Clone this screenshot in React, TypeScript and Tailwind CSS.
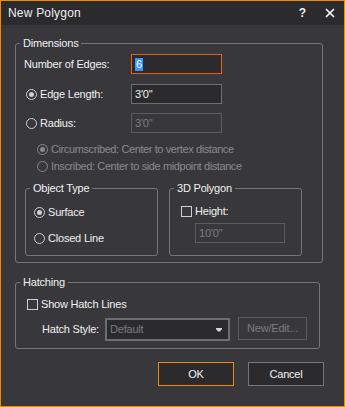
import React from "react";

function Radio({ checked, disabled }: { checked?: boolean; disabled?: boolean }) {
  const c = disabled ? "border-[#8a8a8a]" : "border-[#cfcfcf]";
  const d = disabled ? "bg-[#8a8a8a]" : "bg-[#cfcfcf]";
  return (
    <span className={`w-[11px] h-[11px] rounded-full border ${c} flex items-center justify-center shrink-0`}>
      {checked && <span className={`w-[5px] h-[5px] rounded-full ${d}`} />}
    </span>
  );
}

function Check() {
  return <span className="w-[11px] h-[11px] border border-[#cfcfcf] shrink-0" />;
}

function Legend({ children }: { children: React.ReactNode }) {
  return <legend className="ml-[4px] px-[3px] leading-[14px]">{children}</legend>;
}

export default function App() {
  return (
    <div className="w-[345px] h-[407px] border border-[#f08a00] bg-[#38383c] flex flex-col font-['Liberation_Sans',sans-serif] text-[11px] text-[#f0f0f0] tracking-[-0.2px]">
      <div className="h-[24px] shrink-0 bg-[#2b2b2e] flex items-center pl-[7px] pr-[9px]">
        <span className="text-[12px] tracking-[0.2px] flex-1">New Polygon</span>
        <span className="text-[12px] font-bold mr-[19px]">?</span>
        <svg width="10" height="10" viewBox="0 0 10 10">
          <path d="M1 1 L9 9 M9 1 L1 9" stroke="#ffffff" strokeWidth="1.6" />
        </svg>
      </div>

      <div className="px-[14px] flex flex-col">
        <fieldset className="mt-[11px] w-[308px] border border-[#77777b] rounded-[3px] pb-[6px]">
          <Legend>Dimensions</Legend>
          <div className="mt-[4px] h-[20px] flex items-center">
            <span className="w-[115px] pl-[8px]">Number of Edges:</span>
            <div className="w-[91px] h-[20px] border border-[#e8610c] bg-[#2b2b2e] flex items-center pl-[3px]">
              <span className="bg-[#3399ff] text-white px-[1px] leading-[13px]">6</span>
            </div>
          </div>
          <div className="mt-[10px] h-[20px] flex items-center">
            <span className="w-[115px] pl-[10px] flex items-center gap-[3px]">
              <Radio checked />
              Edge Length:
            </span>
            <div className="w-[91px] h-[20px] border border-[#6e6e72] bg-[#2b2b2e] flex items-center pl-[3px]">3'0"</div>
          </div>
          <div className="mt-[9px] h-[20px] flex items-center">
            <span className="w-[115px] pl-[10px] flex items-center gap-[3px]">
              <Radio />
              Radius:
            </span>
            <div className="w-[91px] h-[20px] border border-[#5c5c60] flex items-center pl-[3px] text-[#7c7c7c]">3'0"</div>
          </div>
          <div className="mt-[8px] h-[16px] flex items-center gap-[3px] pl-[21px] text-[#8a8a8a] tracking-[-0.4px]">
            <Radio checked disabled />
            Circumscribed: Center to vertex distance
          </div>
          <div className="mt-[1px] h-[16px] flex items-center gap-[3px] pl-[21px] text-[#8a8a8a] tracking-[-0.4px]">
            <Radio disabled />
            Inscribed: Center to side midpoint distance
          </div>
          <div className="mt-[7px] flex gap-[11px] pl-[9px]">
            <fieldset className="w-[133px] border border-[#77777b] rounded-[3px] pb-[9px]">
              <Legend>Object Type</Legend>
              <div className="mt-[9px] h-[16px] flex items-center gap-[3px] pl-[8px]">
                <Radio checked />
                Surface
              </div>
              <div className="mt-[10px] h-[16px] flex items-center gap-[3px] pl-[8px]">
                <Radio />
                Closed Line
              </div>
            </fieldset>
            <fieldset className="w-[133px] border border-[#77777b] rounded-[3px]">
              <Legend>3D Polygon</Legend>
              <div className="mt-[8px] h-[16px] flex items-center gap-[3px] pl-[11px]">
                <Check />
                Height:
              </div>
              <div className="mt-[4px] ml-[25px] w-[90px] h-[20px] border border-[#5c5c60] flex items-center pl-[3px] text-[#7c7c7c]">
                10'0"
              </div>
            </fieldset>
          </div>
        </fieldset>

        <fieldset className="mt-[12px] w-[305px] border border-[#77777b] rounded-[3px] pb-[7px]">
          <Legend>Hatching</Legend>
          <div className="mt-[7px] h-[16px] flex items-center gap-[3px] pl-[11px]">
            <Check />
            Show Hatch Lines
          </div>
          <div className="mt-[6px] flex items-center">
            <span className="w-[89px] pl-[26px]">Hatch Style:</span>
            <div className="w-[125px] h-[23px] border-2 border-[#6e6e72] bg-[#2b2b2e] flex items-center pl-[3px] pr-[6px] text-[#7c7c7c]">
              <span className="flex-1">Default</span>
              <svg width="6" height="4" viewBox="0 0 6 4">
                <path d="M0 0 H6 V1 L4 3.5 H2 L0 1 Z" fill="#d8d8d8" />
              </svg>
            </div>
            <div className="ml-[8px] -mt-[3px] w-[69px] h-[23px] border border-[#5c5c60] flex items-center justify-center text-[#7c7c7c]">
              New/Edit...
            </div>
          </div>
        </fieldset>

        <div className="mt-[13px] flex justify-end gap-[14px] pr-[6px]">
          <div className="w-[76px] h-[24px] border border-[#f08a00] bg-[#2b2b2e] flex items-center justify-center">OK</div>
          <div className="w-[76px] h-[24px] border border-[#77777b] bg-[#2b2b2e] flex items-center justify-center">Cancel</div>
        </div>
      </div>
    </div>
  );
}
